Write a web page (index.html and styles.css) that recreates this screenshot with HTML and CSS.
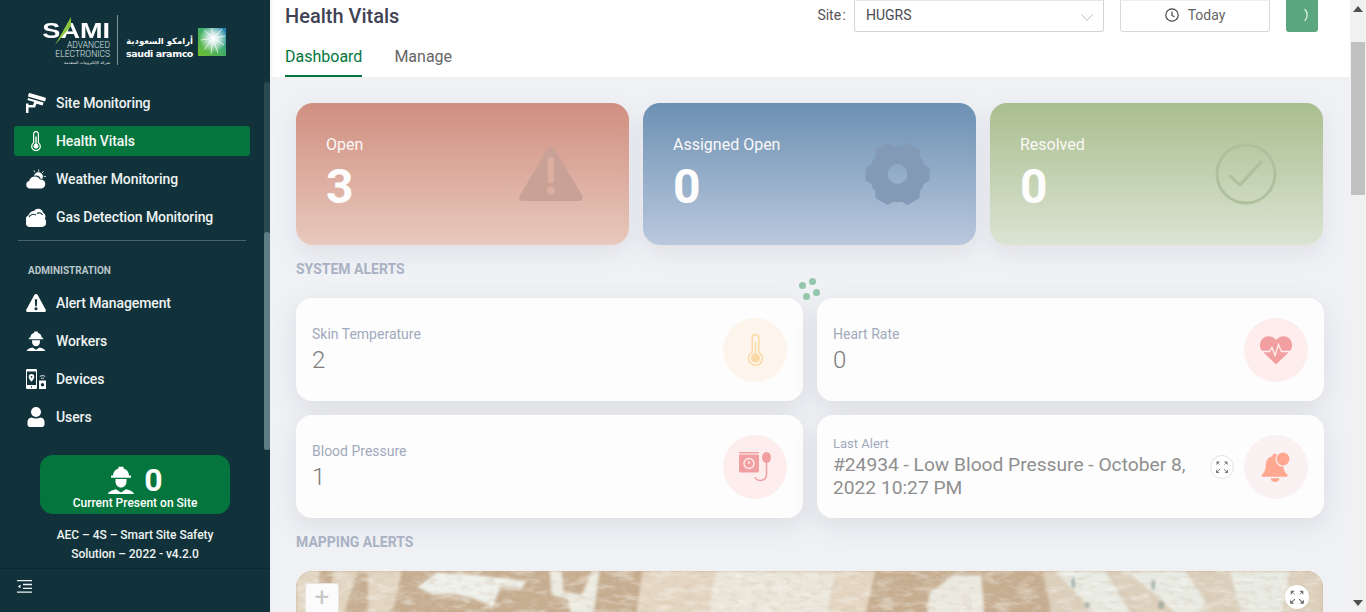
FILE: index.html
```html
<!DOCTYPE html>
<html lang="en">
<head>
<meta charset="utf-8">
<title>Health Vitals</title>
<link rel="stylesheet" href="styles.css">
</head>
<body>
<svg class="defs" width="0" height="0" aria-hidden="true">
  <defs>
    <symbol id="worker" viewBox="0 0 28 28">
      <path d="M6 9.500a8 8 0 0 1 5.500-7V.8h5v1.700a8 8 0 0 1 5.500 7h2v2.200H4v-2.200z" fill="currentColor"/>
      <path d="M8.500 13h11v2.500c0 3.600-2.400 6-5.500 6s-5.500-2.400-5.500-6z" fill="currentColor"/>
      <path d="M1 28c.5-2.200 2.600-3.300 8-4.800l5 3.200 5-3.200c5.400 1.500 7.500 2.600 8 4.800z" fill="currentColor"/>
    </symbol>
    <symbol id="expand" viewBox="0 0 14 14">
      <path d="M2.500 2.500l2.500 2.500M11.500 2.500L9 5" fill="none" stroke="currentColor" stroke-width=".8" opacity=".7"/>
      <path d="M2 12l3.200-3.200" fill="none" stroke="currentColor" stroke-width=".9"/>
      <path d="M12 12L8.800 8.800" fill="none" stroke="currentColor" stroke-width=".9"/>
      <path d="M1 9.500V13h3.500zM13 9.500V13H9.500zM1.500 1.500H5L1.500 5zM12.500 1.500H9L12.500 5z" fill="currentColor"/>
    </symbol>
    <filter id="rock" x="0" y="0" width="100%" height="100%">
      <feTurbulence type="fractalNoise" baseFrequency="0.05 0.13" numOctaves="5" seed="7"/>
      <feColorMatrix values="0 0 0 0 0.95  0 0 0 0 0.95  0 0 0 0 0.90  3.400 0 0 0 -1.600"/>
    </filter>
    <filter id="grit" x="0" y="0" width="100%" height="100%">
      <feTurbulence type="fractalNoise" baseFrequency="0.09 0.2" numOctaves="4" seed="23"/>
      <feColorMatrix values="0 0 0 0 0.66  0 0 0 0 0.55  0 0 0 0 0.44  4 0 0 0 -2"/>
    </filter>
    <filter id="soft" x="-20%" y="-20%" width="140%" height="140%"><feGaussianBlur stdDeviation="1.800"/></filter>
    <filter id="softer" x="-50%" y="-50%" width="200%" height="200%"><feGaussianBlur stdDeviation="1"/></filter>
  </defs>
</svg>

<aside class="sidebar">
  <div class="logo">
    <div class="logo-sami">
      <span class="sami-word">SAMI</span>
      <span class="sami-line">ADVANCED</span>
      <span class="sami-line">ELECTRONICS</span>
      <span class="sami-ar">شركة الإلكترونيات المتقدمة</span>
      <svg class="sami-spark" viewBox="0 0 16 28"><path d="M16 0v9L0 28z" fill="#8cc63f"/></svg>
    </div>
    <div class="logo-rule"></div>
    <div class="logo-aramco">
      <span class="aramco-ar">أرامكو السعودية</span>
      <span class="aramco-en">saudi aramco</span>
    </div>
    <svg class="aramco-mark" viewBox="0 0 28 28">
      <defs>
        <linearGradient id="arm" x1="0" y1="1" x2="1" y2="0"><stop offset="0" stop-color="#6fbf2e"/><stop offset=".55" stop-color="#3fae6a"/><stop offset="1" stop-color="#1a7fc0"/></linearGradient>
        <radialGradient id="star" cx=".55" cy=".38" r=".5"><stop offset="0" stop-color="#fff"/><stop offset=".35" stop-color="#e6f2f6" stop-opacity=".9"/><stop offset="1" stop-color="#fff" stop-opacity="0"/></radialGradient>
      </defs>
      <rect width="28" height="28" fill="url(#arm)"/>
      <rect width="28" height="28" fill="url(#star)"/>
      <path d="M15 10L24 1M15 10L27 8M15 10L26 17M15 10L20 25M15 10L13 26M15 10L6 22M15 10L3 12M15 10L6 2M15 10L14 0" stroke="#fff" stroke-width=".7"/>
    </svg>
  </div>

  <nav class="menu">
    <a class="item">
      <svg class="ico" viewBox="0 0 20 20"><path d="M3.500 0l15.500 4.500c.7.200 1 .8.800 1.400L19 8.500l-17-5L2.700.6c.1-.5.500-.7.800-.6z" fill="currentColor"/><path d="M2 5l15.500 4.500-.8 3-6.200-1.800-1.500 3.800H2.500V20H0V10.500h2.500V12h4.500l1.200-3L1.500 7z" fill="currentColor"/></svg>
      <span>Site Monitoring</span>
    </a>
    <a class="item active">
      <svg class="ico" viewBox="0 0 22 22"><path d="M8.400 13V3.200a2.600 2.600 0 0 1 5.200 0V13a4.700 4.700 0 1 1-5.200 0z" fill="none" stroke="currentColor" stroke-width="1.300"/><circle cx="11" cy="16.800" r="2.700" fill="currentColor"/><path d="M11 15V6" stroke="currentColor" stroke-width="1.500"/></svg>
      <span>Health Vitals</span>
    </a>
    <a class="item">
      <svg class="ico" viewBox="0 0 20 20"><path d="M4 19.500a3.800 3.800 0 0 1-.8-7.500 5.800 5.800 0 0 1 10.800-1.400 4.500 4.500 0 0 1 1.500 8.900z" fill="currentColor"/><path d="M8.500 6.300a4 4 0 0 1 7.800 2.700l-1 1a6 6 0 0 0-6.800-3.700zM12.500.5l.4 2.200M17.500 2.300l-1.500 1.800M20 7.500l-2.200-.1M7.800 1.500l1.200 1.800" fill="currentColor" stroke="currentColor" stroke-width=".8"/></svg>
      <span>Weather Monitoring</span>
    </a>
    <a class="item">
      <svg class="ico" viewBox="0 0 20 20"><path d="M3.800 20A3.800 3.800 0 0 1 .2 14.500 4.500 4.500 0 0 1 2.500 8.200 6 6 0 0 1 8 4a5 5 0 0 1 9 1.500 5 5 0 0 1 1.800 6.500 4.500 4.500 0 0 1-2.800 8z" fill="currentColor"/><path d="M3 10c1.200-2.800 5-3.500 7-1.800M11 6.500c2-1.200 4.500-.5 5.500 1.500" fill="none" stroke="#11323b" stroke-width="1.100"/></svg>
      <span>Gas Detection Monitoring</span>
    </a>
  </nav>
  <div class="divider"></div>
  <div class="section">ADMINISTRATION</div>
  <nav class="menu">
    <a class="item">
      <svg class="ico" viewBox="0 0 22 22"><path fill-rule="evenodd" d="M11 1c.7 0 1.300.4 1.700 1l9 16.500c.6 1.200-.2 2.500-1.600 2.500H1.900C.5 21-.3 19.700.3 18.500l9-16.500c.4-.6 1-1 1.700-1zM9.700 7l.4 7.500h1.800l.4-7.500zM11 15.600a1.700 1.700 0 1 0 0 3.400 1.700 1.700 0 0 0 0-3.400z" fill="currentColor"/></svg>
      <span>Alert Management</span>
    </a>
    <a class="item">
      <svg class="ico"><use href="#worker"/></svg>
      <span>Workers</span>
    </a>
    <a class="item">
      <svg class="ico" viewBox="0 0 20 20"><path fill-rule="evenodd" d="M1.300 0h8.400A1.300 1.300 0 0 1 11 1.300v17.400A1.300 1.300 0 0 1 9.700 20H1.300A1.300 1.300 0 0 1 0 18.700V1.300A1.300 1.300 0 0 1 1.300 0zM1 2.500v13.500h9V2.500zM5.500 5a2.800 2.800 0 0 1 2.800 2.800c0 2-2.800 5-2.800 5s-2.800-3-2.800-5A2.800 2.800 0 0 1 5.500 5zm0 1.900a.9.900 0 1 0 0 1.800.9.900 0 0 0 0-1.800zM5 17.300h1v1.400H5z" fill="currentColor"/><path fill-rule="evenodd" d="M13 11.500h7V20h-7zM16.500 14a1.700 1.700 0 1 0 0 3.400 1.700 1.700 0 0 0 0-3.400z" fill="currentColor"/><path d="M13.800 7.500c1.600-1.200 3.800-1.200 5.400 0M15 9.500c.9-.6 2-.6 2.900 0" fill="none" stroke="currentColor" stroke-width=".9"/></svg>
      <span>Devices</span>
    </a>
    <a class="item">
      <svg class="ico" viewBox="0 0 20 20"><circle cx="10" cy="5" r="5" fill="currentColor"/><path d="M3.500 20A2.500 2.500 0 0 1 1.500 18v-3.500A4.500 4.500 0 0 1 5.500 10.500c2.800 1.400 6.200 1.400 9 0a4.500 4.500 0 0 1 4 4V18a2.500 2.500 0 0 1-2 2z" fill="currentColor"/></svg>
      <span>Users</span>
    </a>
  </nav>

  <div class="present">
    <div class="present-top">
      <svg class="present-ico"><use href="#worker"/></svg>
      <strong>0</strong>
    </div>
    <div class="present-label">Current Present on Site</div>
  </div>
  <p class="version">AEC – 4S – Smart Site Safety<br>Solution – 2022 - v4.2.0</p>

  <div class="collapse">
    <svg class="collapse-ico" viewBox="0 0 15 13"><path d="M0 .7h15M6 4.500h9M6 8.300h9M0 12.200h15" stroke="currentColor" stroke-width="1.300"/><path d="M3.500 4.500v3.800L.8 6.400z" fill="currentColor"/></svg>
  </div>
  <div class="side-track"><div class="side-thumb"></div></div>
</aside>

<main class="main">
  <header class="head">
    <div class="head-top">
      <h1>Health Vitals</h1>
      <div class="controls">
        <label class="site-label">Site :</label>
        <div class="select">
          <span>HUGRS</span>
          <svg class="chev" viewBox="0 0 12 7"><path d="M.5.500L6 6.300 11.500.5" fill="none" stroke="#bdbdbd" stroke-width="1"/></svg>
        </div>
        <button class="today">
          <svg class="clock" viewBox="0 0 14 14"><circle cx="7" cy="7" r="6.200" fill="none" stroke="#444" stroke-width="1.200"/><path d="M7 3.400V7.400l2.400 1.400" fill="none" stroke="#444" stroke-width="1.200"/></svg>
          Today
        </button>
        <button class="refresh"><svg class="spin" viewBox="0 0 8 14"><path d="M2 1.500c2.800 2.800 2.800 8.200 0 11" fill="none" stroke="#e6f3ec" stroke-width="1.200" stroke-linecap="round"/></svg></button>
      </div>
    </div>
    <div class="tabs">
      <a class="tab tab-on">Dashboard</a>
      <a class="tab">Manage</a>
    </div>
  </header>

  <section class="content">
    <div class="stats">
      <div class="stat stat-red">
        <div><div class="stat-label">Open</div><div class="stat-num">3</div></div>
        <svg class="stat-ico" viewBox="0 0 64 54"><path d="M32 0c1.500 0 2.800.8 3.600 2l27.800 47c1.200 2.200-.2 5-3 5H3.600c-2.800 0-4.200-2.800-3-5L28.400 2c.8-1.200 2.100-2 3.600-2z" fill="#c9a196"/><path d="M28.800 13v20a3.200 3.200 0 0 0 6.400 0V13a3.200 3.200 0 0 0-6.400 0zM32 39.500a4 4 0 1 0 0 8 4 4 0 0 0 0-8z" fill="#dcae9f"/></svg>
      </div>
      <div class="stat stat-blue">
        <div><div class="stat-label">Assigned Open</div><div class="stat-num">0</div></div>
        <svg class="stat-ico gear" viewBox="0 0 64 62"><path fill-rule="evenodd" d="M22 0l6 3.600a10 10 0 0 1 8 0L42 0l12 7 .2 7a12 12 0 0 1 4 7L64 24.800v12.400l-5.800 3.800a12 12 0 0 1-4 7L54 55l-12 7-6-3.600a10 10 0 0 1-8 0L22 62 10 55l-.2-7a12 12 0 0 1-4-7L0 37.200V24.800L5.800 21a12 12 0 0 1 4-7L10 7zM32 21a10 10 0 1 0 0 20 10 10 0 0 0 0-20z" fill="#829ab6"/></svg>
      </div>
      <div class="stat stat-green">
        <div><div class="stat-label">Resolved</div><div class="stat-num">0</div></div>
        <svg class="stat-ico" viewBox="0 0 62 62"><circle cx="31" cy="31" r="29" fill="none" stroke="#afc09f" stroke-width="3"/><path d="M15 33l10 9 21-23" fill="none" stroke="#afc09f" stroke-width="3" stroke-linecap="round" stroke-linejoin="round"/></svg>
      </div>
    </div>

    <h2 class="sec-title">SYSTEM ALERTS</h2>
    <div class="alerts">
      <div class="alert">
        <div class="alert-text"><div class="alert-label">Skin Temperature</div><div class="alert-value">2</div></div>
        <div class="round round-amber">
          <svg class="round-ico" viewBox="0 0 18 34"><path d="M5.500 20V4.500a3.500 3.500 0 0 1 7 0V20a7.300 7.300 0 1 1-7 0z" fill="none" stroke="#fbd9a6" stroke-width="1.600"/><circle cx="9" cy="26" r="4.800" fill="#fbd9a6"/><path d="M9 24V9" stroke="#fbd9a6" stroke-width="1.600"/></svg>
        </div>
      </div>
      <div class="alert">
        <div class="alert-text"><div class="alert-label">Heart Rate</div><div class="alert-value">0</div></div>
        <div class="round round-red">
          <svg class="round-ico wide" viewBox="0 0 32 29"><path d="M16 29L2 15.500C-1.500 11.500-.2 4.500 4 2c4-2.500 9-1.500 12 2.500C19 .5 24-.5 28 2c4.200 2.500 5.500 9.500 2 13.500z" fill="#f29fa1"/><path d="M0 16h9.500l2.500-4 3 8 3.500-11 3 7H32" fill="none" stroke="#fdf0ef" stroke-width="1.300"/></svg>
        </div>
      </div>
      <div class="alert">
        <div class="alert-text"><div class="alert-label">Blood Pressure</div><div class="alert-value">1</div></div>
        <div class="round round-red">
          <svg class="round-ico wide" viewBox="0 0 32 30"><rect y="2.500" width="20" height="18" rx="1.500" fill="#f29fa1"/><rect y="0" width="20" height="1.400" fill="#f29fa1"/><circle cx="10" cy="11.500" r="5" fill="none" stroke="#fdecea" stroke-width="1.400"/><path d="M10 9v3" stroke="#fdecea" stroke-width="1.400"/><ellipse cx="27.500" cy="5.500" rx="4.500" ry="5.500" fill="#f29fa1"/><path d="M27.500 11v11c0 8-10 8-11.500 3" fill="none" stroke="#f29fa1" stroke-width="1.500"/></svg>
        </div>
      </div>
      <div class="alert">
        <div class="alert-text last"><div class="alert-label small">Last Alert</div><div class="alert-long">#24934 - Low Blood Pressure - October 8, 2022 10:27 PM</div></div>
        <button class="mini"><svg class="mini-ico"><use href="#expand"/></svg></button>
        <div class="round round-pale">
          <svg class="round-ico wide" viewBox="0 0 32 32"><path d="M15 2a3 3 0 0 1 3 2.500 10 10 0 0 1 6 9.500c0 6 2 8 4 10a1.500 1.500 0 0 1-1 2.500H2a1.500 1.500 0 0 1-1-2.500c2-2 4-4 4-10a10 10 0 0 1 7-9.500A3 3 0 0 1 15 2z" fill="#fea892"/><path d="M10.500 28h9a4.500 4 0 0 1-9 0z" fill="#fea892"/><circle cx="23.500" cy="7.500" r="7.500" fill="#fea892" stroke="#faf2f1" stroke-width="1.200"/></svg>
        </div>
      </div>
    </div>

    <h2 class="sec-title">MAPPING ALERTS</h2>
    <div class="map">
      <svg class="map-art" viewBox="0 0 1028 60" preserveAspectRatio="none" aria-hidden="true">
        <rect width="1028" height="60" fill="#c6ad90"/>
        <g filter="url(#soft)">
          <path d="M0 0h24l-8 60H0zM38 0h24l-20 60H26zM72 0h34l-8 36-26 24z" fill="#e2d6c2"/>
          <path d="M121 16l20-14 40 2 30 4 20 2-6 8-20-4-8 22-18-8-26-6-16 2z" fill="#eef0ea"/>
          <path d="M254 0h12l2 20 18 4 10-24h8l-8 56h-18l-6-28-16-4z" fill="#ecebe1"/>
          <path d="M347 0h233l-14 60H338z" fill="#e4d6c2"/>
          <path d="M420 0h120l-12 60H410z" fill="#ebe6da"/>
          <path d="M634 22l24-18 28 0 4 56h-60z" fill="#ebe9df"/>
          <path d="M747 0h281v60H760z" fill="#dccfbc"/>
          <path d="M760 0h50l30 50-22 10-24-24zM830 0h60l20 30-12 30-30-30zM935 0h60l-8 40-36 20z" fill="#e9ebe3"/>
        </g>
        <rect width="1028" height="60" filter="url(#rock)" opacity=".4"/>
        <rect width="1028" height="60" filter="url(#grit)" opacity=".3"/>
        <g fill="#7e9793" opacity=".55" filter="url(#softer)">
          <ellipse cx="778" cy="12" rx="2" ry="6"/>
          <ellipse cx="792" cy="34" rx="2.500" ry="3"/>
          <ellipse cx="858" cy="14" rx="2" ry="5"/>
          <ellipse cx="866" cy="34" rx="3" ry="4"/>
        </g>
      </svg>
      <button class="zoom-btn">+</button>
      <button class="map-full"><svg class="map-full-ico"><use href="#expand"/></svg></button>
    </div>
  </section>

  <div class="loader" aria-hidden="true"><i></i><i></i><i></i><i></i></div>
</main>

<div class="scrollbar">
  <svg class="arrow" viewBox="0 0 10 6"><path d="M0 6l5-6 5 6z" fill="#505050"/></svg>
  <div class="thumb"></div>
  <svg class="arrow arrow-down" viewBox="0 0 10 6"><path d="M0 0l5 6 5-6z" fill="#505050"/></svg>
</div>
</body>
</html>
```
FILE: styles.css
```css
* { box-sizing: border-box; }
html, body { margin: 0; height: 612px; overflow: hidden; }
body { display: flex; font-family: Roboto, "Noto Sans", sans-serif; background: #f0f1f5; }
.defs { position: absolute; }
button { font-family: inherit; }

/* sidebar */
.sidebar { position: relative; width: 270px; flex: none; height: 612px; background: #11323b; color: #f1f4f4; display: flex; flex-direction: column; }
.logo { height: 84px; display: flex; align-items: flex-start; padding-top: 15px; color: #fff; }
.logo-sami { position: relative; width: 110px; display: flex; flex-direction: column; align-items: flex-end; padding-top: 6px; }
.sami-word { font: bold 22px/20px "Liberation Sans", sans-serif; transform: scaleX(1.23); transform-origin: right center; }
.sami-line { font: 300 8.500px/9px Roboto, sans-serif; color: #dfe6e6; white-space: nowrap; }
.sami-ar { font: 4px/7px "DejaVu Sans", sans-serif; color: #e8eded; white-space: nowrap; }
.sami-spark { position: absolute; left: 55px; top: 2px; width: 16px; height: 28px; }
.logo-rule { width: 1px; height: 50px; flex: none; margin: 0 7px; background: #7d9197; }
.logo-aramco { display: flex; flex-direction: column; align-items: flex-end; width: 68px; flex: none; padding-top: 20px; }
.aramco-ar { font: bold 8.500px/13px "DejaVu Sans", sans-serif; white-space: nowrap; }
.aramco-en { font: bold 9.500px/11px "DejaVu Sans", sans-serif; white-space: nowrap; letter-spacing: -.4px; }
.aramco-mark { width: 28px; height: 28px; flex: none; margin: 13px 0 0 5px; }

.menu { display: flex; flex-direction: column; }
.item { height: 30px; margin: 4px 20px 4px 14px; padding-left: 12px; display: flex; align-items: center; gap: 10px; border-radius: 3px; font-size: 14px; font-weight: 500; color: #eef2f2; letter-spacing: -.1px; }
.item.active { background: #04763d; color: #f4f8f6; }
.ico { width: 20px; height: 20px; flex: none; color: #fff; }
.divider { height: 1px; margin: 4px 24px 0 18px; background: #4b646b; }
.section { height: 43px; padding: 23px 0 0 28px; font-size: 10px; line-height: 14px; font-weight: 700; color: #b9c6ca; }

.present { width: 190px; height: 59px; margin: 19px 0 0 40px; background: #04763d; border-radius: 13px; color: #fff; display: flex; flex-direction: column; align-items: center; padding-top: 9px; }
.present-top { display: flex; align-items: center; gap: 9px; height: 32px; }
.present-ico { width: 28px; height: 30px; color: #fff; }
.present-top strong { font-size: 32px; line-height: 32px; font-weight: 700; }
.present-label { font-size: 12px; line-height: 15px; font-weight: 500; }
.version { margin: 12px 0 0; font-size: 12px; line-height: 19px; font-weight: 500; text-align: center; color: #eef2f2; letter-spacing: -.03px; }
.collapse { margin-top: auto; height: 44px; border-top: 1px solid #0d2a32; padding: 11px 0 0 17px; }
.collapse-ico { display: block; width: 15px; height: 13px; color: #eef2f2; }
.side-track { position: absolute; right: 0; top: 82px; width: 6px; height: 368px; background: #2a4a52; border-radius: 3px 3px 0 0; }
.side-thumb { margin-top: 150px; height: 218px; background: #5f7d83; border-radius: 3px; }

/* main */
.main { position: relative; flex: 1; min-width: 0; height: 612px; overflow: hidden; display: flex; flex-direction: column; }
.head { height: 77px; flex: none; background: #fff; padding-left: 15px; box-shadow: inset 5px 0 5px -5px #e6e6e6; }
.head-top { height: 32px; display: flex; justify-content: space-between; align-items: flex-start; padding-right: 32px; }
h1 { margin: 0; font-size: 20px; line-height: 32px; font-weight: 500; color: #3f4254; }
.controls { display: flex; align-items: flex-start; }
.site-label { font-size: 14px; line-height: 30px; color: #555; margin-right: 8px; word-spacing: -2px; }
.select { width: 250px; height: 32px; border: 1px solid #d4d4d8; border-top-color: #e6e6e6; border-radius: 0 0 3px 3px; display: flex; justify-content: space-between; align-items: center; padding: 0 10px 2px 11px; font-size: 14px; color: #4a4a50; background: #fff; }
.chev { width: 12px; height: 7px; margin-top: 4px; }
.today { width: 150px; height: 32px; margin-left: 16px; border: 1px solid #d9d9dc; border-top-color: #eee; border-radius: 0 0 3px 3px; background: #fff; display: flex; align-items: center; justify-content: center; gap: 9px; font-size: 14px; color: #666; padding: 0 0 2px; }
.clock { width: 14px; height: 14px; }
.refresh { width: 32px; height: 32px; margin-left: 16px; border: 0; border-radius: 0 0 3px 3px; background: #5aa77f; display: flex; align-items: center; justify-content: flex-end; padding: 0 7px 2px 0; }
.spin { width: 8px; height: 14px; }
.tabs { display: flex; gap: 32px; margin-top: 10px; }
.tab { height: 35px; font-size: 16px; line-height: 29px; color: #666; }
.tab-on { color: #04763d; border-bottom: 2px solid #04763d; }

.content { flex: 1; padding: 26px 26px 0; background: #f0f1f5; }
.stats { display: grid; grid-template-columns: repeat(3, 1fr); gap: 14px; margin-right: 1px; }
.stat { height: 142px; border-radius: 17px; padding: 0 46px 0 30px; display: flex; justify-content: space-between; align-items: center; color: #fff; box-shadow: 0 8px 22px rgba(110, 115, 130, .13); }
.stat-red { background: linear-gradient(#d08f80, #e8c9bd); }
.stat-blue { background: linear-gradient(#6c91b3, #bac8dd); }
.stat-green { background: linear-gradient(#a9be8e, #dbe4d3); }
.stat-label { font-size: 16px; line-height: 20px; color: #fbf8f6; margin-top: 1px; }
.stat-num { font-size: 48px; line-height: 56px; font-weight: 700; color: #fdfdfd; margin-top: 4px; }
.stat-ico { width: 64px; height: 54px; }
.stat-ico.gear { width: 65px; height: 62px; }
.stat-green .stat-ico { width: 62px; height: 62px; }

.sec-title { margin: 0; padding: 16px 0 0; height: 53px; font-size: 14px; line-height: 16px; font-weight: 700; color: #a9b2c3; }
.alerts { display: grid; grid-template-columns: repeat(2, 1fr); gap: 14px; }
.alert { height: 103px; background: #fdfdfd; border-radius: 16px; padding: 0 16px; display: flex; align-items: center; justify-content: space-between; box-shadow: 0 8px 24px rgba(100, 105, 120, .14); }
.alert-text { flex: 1; min-width: 0; }
.alert-text.last { padding-right: 12px; }
.alert-label { font-size: 14px; line-height: 18px; color: #a1aabc; }
.alert-label.small { font-size: 13px; }
.alert-value { font-size: 24px; line-height: 30px; color: #7c7c7c; font-weight: 300; margin-top: 2px; }
.alert-long { font-size: 19.200px; line-height: 23px; color: #8f8f8f; }
.round { width: 64px; height: 64px; border-radius: 50%; flex: none; display: flex; align-items: center; justify-content: center; margin-left: 10px; }
.round-amber { background: #fdf4ec; }
.round-red { background: #fdeeed; }
.round-pale { background: #faf2f2; }
.round-ico { width: 17px; height: 33px; }
.round-ico.wide { width: 32px; height: 30px; }
.mini { width: 24px; height: 24px; border-radius: 50%; flex: none; border: 1px solid #e3e3e6; background: #fff; padding: 0; display: flex; align-items: center; justify-content: center; }
.mini-ico { width: 14px; height: 14px; color: #777; }

.map { position: relative; height: 300px; border-radius: 17px 17px 0 0; margin-right: 1px; overflow: hidden; background: #c6ad90; }
.map-art { display: block; width: 100%; height: 60px; }
.zoom-btn { position: absolute; left: 9px; top: 12px; width: 34px; height: 33px; border: 1px solid #e8e5e0; border-radius: 3px 3px 0 0; background: #fbfbfb; color: #c9c9c9; font-size: 26px; line-height: 26px; padding: 0 0 5px; }
.map-full { position: absolute; right: 14px; top: 14px; width: 24px; height: 24px; border-radius: 50%; border: 0; background: #fff; padding: 0; display: flex; align-items: center; justify-content: center; }
.map-full-ico { width: 16px; height: 16px; color: #6c6c6c; }

.loader { position: absolute; left: 528px; top: 278px; width: 24px; height: 24px; }
.loader i { position: absolute; width: 7px; height: 7px; border-radius: 50%; background: #93c6ab; }
.loader i:nth-child(1) { left: 1px; top: 4px; }
.loader i:nth-child(2) { left: 11px; top: 0; }
.loader i:nth-child(3) { left: 15px; top: 11px; }
.loader i:nth-child(4) { left: 5px; top: 15px; }

/* page scrollbar */
.scrollbar { position: relative; width: 16px; flex: none; height: 612px; background: #f1f1f1; display: flex; flex-direction: column; align-items: center; padding-top: 6px; }
.arrow { width: 10px; height: 6px; flex: none; }
.thumb { width: 14px; height: 153px; margin-top: 30px; background: #c1c1c1; }
.arrow-down { margin-top: auto; margin-bottom: 6px; }
```
